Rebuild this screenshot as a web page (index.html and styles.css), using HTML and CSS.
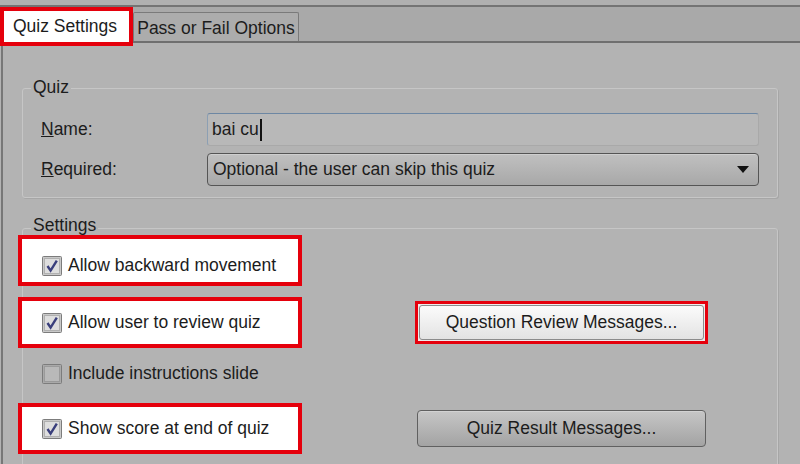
FILE: index.html
```html
<!DOCTYPE html>
<html lang="en">
<head>
  <meta charset="UTF-8" />
  <title>Quiz Settings</title>
  <link rel="stylesheet" href="styles.css">
</head>
<body>
  <div class="topbar"></div>
  <div class="tabs">
    <div class="tab active">Quiz Settings</div>
    <div class="tab">Pass or Fail Options</div>
  </div>

  <div class="panel">
    <div class="group quiz">
      <div class="group-title">Quiz</div>
      <div class="fields">
        <label><u>N</u>ame:</label>
        <div class="input">bai cu<span class="caret"></span></div>
        <label><u>R</u>equired:</label>
        <div class="select">
          <span>Optional - the user can skip this quiz</span>
          <svg class="arrow" width="12" height="7" viewBox="0 0 12 7"><path d="M0 0 H12 L6 7 Z" fill="#111"/></svg>
        </div>
      </div>
    </div>

    <div class="group settings">
      <div class="group-title">Settings</div>

      <div class="row">
        <div class="opt mark first">
          <svg class="cb" width="20" height="20" viewBox="0 0 20 20"><rect x="0.5" y="0.5" width="19" height="19" rx="1" fill="#c9c9c9" stroke="#7c7c7c"/><rect x="2.5" y="2.5" width="15" height="15" fill="#dedede" stroke="#b0b0b0"/><path d="M5.5 10 L8.6 14.6 L14.8 4.6" fill="none" stroke="#3a3f7c" stroke-width="2.4"/></svg>
          <span>Allow backward movement</span>
        </div>
      </div>

      <div class="row second">
        <div class="opt mark">
          <svg class="cb" width="20" height="20" viewBox="0 0 20 20"><rect x="0.5" y="0.5" width="19" height="19" rx="1" fill="#c9c9c9" stroke="#7c7c7c"/><rect x="2.5" y="2.5" width="15" height="15" fill="#dedede" stroke="#b0b0b0"/><path d="M5.5 10 L8.6 14.6 L14.8 4.6" fill="none" stroke="#3a3f7c" stroke-width="2.4"/></svg>
          <span>Allow user to review quiz</span>
        </div>
        <span class="btn-mark"><button class="btn light">Question Review Messages...</button></span>
      </div>

      <div class="row">
        <div class="opt">
          <svg class="cb" width="20" height="20" viewBox="0 0 20 20"><rect x="0.5" y="0.5" width="19" height="19" rx="1" fill="#a9a9a9" stroke="#7c7c7c"/><rect x="2.5" y="2.5" width="15" height="15" fill="#b9b9b9" stroke="#9a9a9a"/></svg>
          <span>Include instructions slide</span>
        </div>
      </div>

      <div class="row fourth">
        <div class="opt mark">
          <svg class="cb" width="20" height="20" viewBox="0 0 20 20"><rect x="0.5" y="0.5" width="19" height="19" rx="1" fill="#c9c9c9" stroke="#7c7c7c"/><rect x="2.5" y="2.5" width="15" height="15" fill="#dedede" stroke="#b0b0b0"/><path d="M5.5 10 L8.6 14.6 L14.8 4.6" fill="none" stroke="#3a3f7c" stroke-width="2.4"/></svg>
          <span>Show score at end of quiz</span>
        </div>
        <button class="btn dark">Quiz Result Messages...</button>
      </div>
    </div>
  </div>
</body>
</html>
```

FILE: styles.css
```css
body {
  margin: 0;
  height: 464px;
  overflow: hidden;
  background-color: #b3b3b3;
  font-family: "Liberation Sans", Arial, sans-serif;
  font-size: 17.5px;
  color: #1c1c1c;
}

.topbar {
  height: 5px;
  background-color: #b0b0b0;
  border-bottom: 2px solid #747474;
}

.tabs {
  display: flex;
  align-items: flex-end;
  height: 34px;
  background-color: #a9a9a9;
  border-bottom: 2px solid #6f6f6f;
}

.tab {
  box-sizing: border-box;
  width: 166px;
  height: 29px;
  line-height: 31px;
  text-align: center;
  border: 1px solid #7a7a7a;
  border-bottom: none;
  border-radius: 2px 2px 0 0;
  background-color: #acacac;
}

.tab.active {
  width: 133px;
  height: 39px;
  line-height: 31px;
  margin-bottom: -5px;
  padding-left: 9px;
  text-align: left;
  border: 4px solid #e5000c;
  border-radius: 0;
  background-color: #fff;
  position: relative;
  z-index: 1;
}

.panel {
  display: flow-root;
  box-sizing: border-box;
  height: 421px;
  overflow: hidden;
  margin-left: 1px;
  border-left: 2px solid #777;
  padding: 0 22px 0 19px;
}

.group {
  border: 1px solid #c6c6c6;
  border-radius: 3px;
  box-shadow: 1px 1px 0 #a6a6a6;
}

.group-title {
  width: fit-content;
  line-height: 20px;
  padding: 0 2px;
  background-color: #b3b3b3;
}

.quiz {
  margin-top: 45px;
  padding: 0 17px 11px 18px;
}

.quiz .group-title {
  margin: -12px 0 0 -10px;
}

.fields {
  display: grid;
  grid-template-columns: 166px 552px;
  row-gap: 7px;
  align-items: center;
  margin-top: 16px;
}

.input,
.select {
  box-sizing: border-box;
  height: 33px;
  display: flex;
  align-items: center;
  border-radius: 3px;
}

.input {
  padding-left: 4px;
  border: 1px solid #a9a9a9;
  border-top-color: #6d87a3;
  border-left-color: #8c9fb3;
  background-color: #b8b8b8;
}

.caret {
  width: 2px;
  height: 22px;
  margin-left: 1px;
  background-color: #111;
}

.select {
  justify-content: space-between;
  padding: 0 9px 0 5px;
  border: 1px solid #555;
  border-radius: 4px;
  background: linear-gradient(#c0c0c0, #a8a8a8);
  box-shadow: inset 0 1px 0 #cfcfcf;
}

.settings {
  margin-top: 30px;
  height: 260px;
}

.settings .group-title {
  margin: -14px 0 0 8px;
}

.row {
  display: flex;
  align-items: center;
}

.row.second {
  margin-top: 11px;
}

.row.fourth {
  margin-top: 4px;
}

.opt {
  box-sizing: border-box;
  width: 284px;
  height: 51px;
  margin-left: -5px;
  padding-left: 20px;
  display: flex;
  align-items: center;
  gap: 6px;
  border: 4px solid transparent;
}

.opt.mark {
  border-color: #e5000c;
  background-color: #fff;
}

.opt.first {
  padding-top: 10px;
}

.cb {
  flex-shrink: 0;
}

.btn-mark {
  display: flex;
  margin-left: 113px;
  padding: 1px;
  border: 3px solid #e5000c;
  background-color: #ececec;
}

.btn {
  box-sizing: border-box;
  font-family: inherit;
  font-size: 17.5px;
  color: #1c1c1c;
  padding: 0;
  border-radius: 3px;
}

.btn.light {
  width: 285px;
  height: 35px;
  border: 1px solid #8c8c8c;
  background: linear-gradient(#fbfbfb, #e3e3e3);
}

.btn.dark {
  width: 289px;
  height: 37px;
  margin-left: 115px;
  border: 1px solid #606060;
  border-radius: 4px;
  background: linear-gradient(#c6c6c6, #a3a3a3);
  box-shadow: inset 0 1px 0 #d2d2d2;
}
```
